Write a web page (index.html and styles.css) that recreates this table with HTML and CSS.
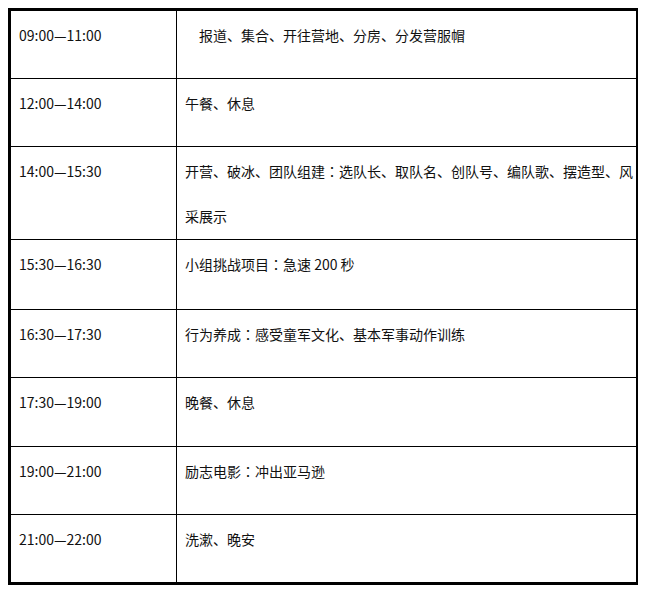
FILE: index.html
```html
<!DOCTYPE html>
<html lang="zh-CN">
<head>
<meta charset="utf-8">
<title>日程安排</title>
<link rel="stylesheet" href="styles.css">
</head>
<body>
<div class="schedule">
  <div class="row">
    <div class="time">09:00—11:00</div>
    <div class="desc">&#12288;报道、集合、开往营地、分房、分发营服帽</div>
  </div>
  <div class="row">
    <div class="time">12:00—14:00</div>
    <div class="desc">午餐、休息</div>
  </div>
  <div class="row">
    <div class="time">14:00—15:30</div>
    <div class="desc">开营、破冰、团队组建<span class="colon" lang="zh-TW">：</span>选队长、取队名、创队号、编队歌、摆造型、风采展示</div>
  </div>
  <div class="row row-tall">
    <div class="time">15:30—16:30</div>
    <div class="desc">小组挑战项目<span class="colon" lang="zh-TW">：</span>急速 200 秒</div>
  </div>
  <div class="row">
    <div class="time">16:30—17:30</div>
    <div class="desc">行为养成<span class="colon" lang="zh-TW">：</span>感受童军文化、基本军事动作训练</div>
  </div>
  <div class="row row-mid">
    <div class="time">17:30—19:00</div>
    <div class="desc">晚餐、休息</div>
  </div>
  <div class="row">
    <div class="time">19:00—21:00</div>
    <div class="desc">励志电影<span class="colon" lang="zh-TW">：</span>冲出亚马逊</div>
  </div>
  <div class="row row-last">
    <div class="time">21:00—22:00</div>
    <div class="desc">洗漱、晚安</div>
  </div>
</div>
</body>
</html>
```
FILE: styles.css
```css
html, body {
  background: #ffffff;
}
body {
  margin: 8px;
  font-family: "Noto Sans CJK SC", "Noto Sans", sans-serif;
  font-size: 14px;
  color: #111111;
}
.schedule {
  width: 630px;
  box-sizing: border-box;
  border-top: 3px solid #000;
  border-left: 3px solid #000;
  border-bottom: 3px solid #000;
  border-right: 2px solid #000;
}
.row {
  display: grid;
  grid-template-columns: 166px 459px;
  min-height: 68px;
  box-sizing: border-box;
  border-bottom: 1px solid #000;
}
.row-tall {
  min-height: 70px;
}
.row-mid {
  min-height: 69px;
}
.row-last {
  border-bottom: none;
  min-height: 67px;
}
.time,
.desc {
  padding: 2px 0 0 8px;
  line-height: 45px;
  box-sizing: border-box;
}
.time {
  border-right: 1px solid #000;
  white-space: nowrap;
}
.colon {
  font-family: "Noto Sans CJK TC", "Noto Sans CJK SC", sans-serif;
}
```
